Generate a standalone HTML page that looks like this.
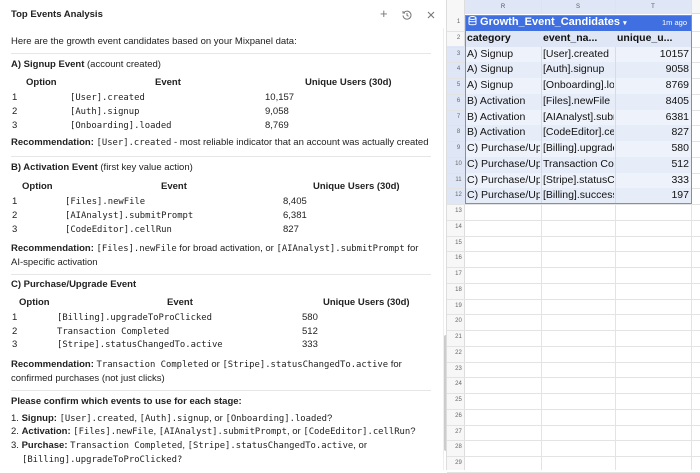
<!DOCTYPE html>
<html><head><style>
*{margin:0;padding:0;box-sizing:border-box}
body{width:700px;height:470px;overflow:hidden;background:#fff;font-family:"Liberation Sans",sans-serif;color:#222;position:relative;font-size:9.5px}
.a{position:absolute;white-space:nowrap;line-height:12px}
.m{font-family:"DejaVu Sans Mono","Liberation Mono",monospace;font-size:8.9px}
b{font-weight:bold}
.hr{position:absolute;left:11px;width:420px;height:1px;background:#e6e6e6}
.th{font-weight:bold}
#grid{position:absolute;left:446px;top:0;width:254px;height:470px;background:#fff;border-left:1px solid #ddd}
.gl{position:absolute;background:#e3e3e3}
.rn{position:absolute;left:5px;width:13px;text-align:center;font-size:6px;color:#666;line-height:15.75px}
.c{position:absolute;font-size:10.5px;line-height:15.75px;white-space:nowrap;overflow:hidden;color:#111}
</style></head><body>
<div class="a" style="left:11px;top:9px;font-weight:bold;font-size:9.5px">Top Events Analysis</div>
<div class="a" style="left:380px;top:8px;font-size:13px;color:#777">+</div>
<svg class="a" style="left:402px;top:10px" width="10" height="10" viewBox="0 0 10 10" fill="none" stroke="#777" stroke-width="1"><path d="M2 2.5A4 4 0 1 1 1 5.5"/><path d="M1 1v2h2"/><path d="M5 3v2.3l1.5 1"/></svg>
<svg class="a" style="left:427px;top:11px" width="8" height="8" viewBox="0 0 8 8" stroke="#777" stroke-width="1.1"><path d="M1 1l6 6M7 1l-6 6"/></svg>
<div style="position:absolute;left:443px;top:28px;width:1px;height:442px;background:#eee"></div>
<div style="position:absolute;left:444px;top:335px;width:4px;height:116px;background:#ccc;border-radius:2px"></div>

<div class="a" style="left:11px;top:36px">Here are the growth event candidates based on your Mixpanel data:</div>
<div class="hr" style="top:53px"></div>
<div class="a" style="left:11px;top:59px"><b>A) Signup Event</b> (account created)</div>
<div class="a th" style="left:26px;top:77px">Option</div>
<div class="a th" style="left:155px;top:77px">Event</div>
<div class="a th" style="left:305px;top:77px">Unique Users (30d)</div>
<div class="a" style="left:12px;top:92px">1</div><div class="a m" style="left:70px;top:92px">[User].created</div><div class="a" style="left:265px;top:92px">10,157</div>
<div class="a" style="left:12px;top:106px">2</div><div class="a m" style="left:70px;top:106px">[Auth].signup</div><div class="a" style="left:265px;top:106px">9,058</div>
<div class="a" style="left:12px;top:120px">3</div><div class="a m" style="left:70px;top:120px">[Onboarding].loaded</div><div class="a" style="left:265px;top:120px">8,769</div>
<div class="a" style="left:11px;top:137px"><b>Recommendation:</b> <span class="m">[User].created</span> - most reliable indicator that an account was actually created</div>
<div class="hr" style="top:156px"></div>
<div class="a" style="left:11px;top:162px"><b>B) Activation Event</b> (first key value action)</div>
<div class="a th" style="left:22px;top:181px">Option</div>
<div class="a th" style="left:161px;top:181px">Event</div>
<div class="a th" style="left:313px;top:181px">Unique Users (30d)</div>
<div class="a" style="left:12px;top:196px">1</div><div class="a m" style="left:65px;top:196px">[Files].newFile</div><div class="a" style="left:283px;top:196px">8,405</div>
<div class="a" style="left:12px;top:210px">2</div><div class="a m" style="left:65px;top:210px">[AIAnalyst].submitPrompt</div><div class="a" style="left:283px;top:210px">6,381</div>
<div class="a" style="left:12px;top:224px">3</div><div class="a m" style="left:65px;top:224px">[CodeEditor].cellRun</div><div class="a" style="left:283px;top:224px">827</div>
<div class="a" style="left:11px;top:243px"><b>Recommendation:</b> <span class="m">[Files].newFile</span> for broad activation, or <span class="m">[AIAnalyst].submitPrompt</span> for</div>
<div class="a" style="left:11px;top:257px">AI-specific activation</div>
<div class="hr" style="top:274px"></div>
<div class="a" style="left:11px;top:279px"><b>C) Purchase/Upgrade Event</b></div>
<div class="a th" style="left:19px;top:297px">Option</div>
<div class="a th" style="left:167px;top:297px">Event</div>
<div class="a th" style="left:323px;top:297px">Unique Users (30d)</div>
<div class="a" style="left:12px;top:312px">1</div><div class="a m" style="left:57px;top:312px">[Billing].upgradeToProClicked</div><div class="a" style="left:302px;top:312px">580</div>
<div class="a" style="left:12px;top:326px">2</div><div class="a m" style="left:57px;top:326px">Transaction Completed</div><div class="a" style="left:302px;top:326px">512</div>
<div class="a" style="left:12px;top:339px">3</div><div class="a m" style="left:57px;top:339px">[Stripe].statusChangedTo.active</div><div class="a" style="left:302px;top:339px">333</div>
<div class="a" style="left:11px;top:359px"><b>Recommendation:</b> <span class="m">Transaction Completed</span> or <span class="m">[Stripe].statusChangedTo.active</span> for</div>
<div class="a" style="left:11px;top:373px">confirmed purchases (not just clicks)</div>
<div class="hr" style="top:390px"></div>
<div class="a" style="left:11px;top:396px"><b>Please confirm which events to use for each stage:</b></div>
<div class="a" style="left:11px;top:413px">1. <b>Signup:</b> <span class="m">[User].created</span>, <span class="m">[Auth].signup</span>, or <span class="m">[Onboarding].loaded</span>?</div>
<div class="a" style="left:11px;top:426px">2. <b>Activation:</b> <span class="m">[Files].newFile</span>, <span class="m">[AIAnalyst].submitPrompt</span>, or <span class="m">[CodeEditor].cellRun</span>?</div>
<div class="a" style="left:11px;top:440px">3. <b>Purchase:</b> <span class="m">Transaction Completed</span>, <span class="m">[Stripe].statusChangedTo.active</span>, or</div>
<div class="a m" style="left:22px;top:454px">[Billing].upgradeToProClicked?</div>

<div id="grid">
<div style="position:absolute;left:0;top:0;width:254px;height:14px;background:#f7f7f7;border-bottom:1px solid #ddd"></div>
<div style="position:absolute;left:18px;top:0;width:226px;height:14px;background:#dfe7f7"></div>
<div style="position:absolute;left:0;top:0;width:18px;height:470px;background:#f7f7f7;border-right:1px solid #ddd"></div>
<div style="position:absolute;left:0;top:46px;width:18px;height:158px;background:#dfe7f7"></div>
<div class="a" style="left:18px;top:2px;width:76px;text-align:center;font-size:6px;color:#555;line-height:10px">R</div>
<div class="a" style="left:94px;top:2px;width:74px;text-align:center;font-size:6px;color:#555;line-height:10px">S</div>
<div class="a" style="left:168px;top:2px;width:76px;text-align:center;font-size:6px;color:#555;line-height:10px">T</div>
<div class="gl" style="left:94px;top:0;width:1px;height:14px"></div>
<div class="gl" style="left:168px;top:0;width:1px;height:14px"></div>
<div class="gl" style="left:244px;top:0;width:1px;height:470px"></div>
<div class="gl" style="left:94px;top:204px;width:1px;height:266px"></div>
<div class="gl" style="left:168px;top:204px;width:1px;height:266px"></div>
<div id="rows"></div>
<div style="position:absolute;left:18px;top:15px;width:226px;height:15.75px;background:#3f6fe0;color:#fff;font-weight:bold;font-size:11px;line-height:15.75px;padding-left:3px">
<svg width="9" height="10" viewBox="0 0 9 10" style="vertical-align:-1px" fill="none" stroke="#fff" stroke-width="1"><ellipse cx="4.5" cy="2" rx="3.5" ry="1.5"/><path d="M1 2v6c0 1 7 1 7 0V2M1 5c0 1 7 1 7 0"/></svg> Growth_Event_Candidates <span style="font-size:7px">▾</span><span style="position:absolute;right:4px;font-weight:normal;font-size:7.5px">1m ago</span></div>
<div style="position:absolute;left:18px;top:30.75px;width:226px;height:15.75px;background:#dfe7f7"></div>
<div class="c" style="left:20px;top:30.75px;font-weight:bold;width:72px">category</div>
<div class="c" style="left:96px;top:30.75px;font-weight:bold;width:72px">event_na...</div>
<div class="c" style="left:170px;top:30.75px;font-weight:bold;width:72px">unique_u...</div>
<div style="position:absolute;left:18px;top:15px;width:227px;height:189px;border:1px solid #6b8fe6"></div>
</div>
<script>
var g=document.getElementById('rows'),h='';
var d=[["A) Signup","[User].created","10157"],["A) Signup","[Auth].signup","9058"],["A) Signup","[Onboarding].loaded","8769"],["B) Activation","[Files].newFile","8405"],["B) Activation","[AIAnalyst].submitPrompt","6381"],["B) Activation","[CodeEditor].cellRun","827"],["C) Purchase/Upgrade","[Billing].upgradeToProClicked","580"],["C) Purchase/Upgrade","Transaction Completed","512"],["C) Purchase/Upgrade","[Stripe].statusChangedTo.active","333"],["C) Purchase/Upgrade","[Billing].successful","197"]];
for(var i=0;i<29;i++){var t=15+i*15.75;
h+='<div class="rn" style="top:'+t+'px">'+(i+1)+'</div>';
h+='<div class="gl" style="left:0;top:'+(t+15.75)+'px;width:254px;height:1px"></div>';
if(i>=2&&i<12){var r=d[i-2];
h+='<div style="position:absolute;left:18px;top:'+t+'px;width:226px;height:15.75px;background:'+(i%2?'#e6ecf8':'#eef2fb')+'"></div>';
h+='<div class="gl" style="left:94px;top:'+t+'px;width:1px;height:15.75px;background:#d5dbe8"></div><div class="gl" style="left:168px;top:'+t+'px;width:1px;height:15.75px;background:#d5dbe8"></div>';
h+='<div class="c" style="left:20px;top:'+t+'px;width:73px">'+r[0]+'</div><div class="c" style="left:96px;top:'+t+'px;width:71px">'+r[1]+'</div><div class="c" style="left:170px;top:'+t+'px;width:72px;text-align:right">'+r[2]+'</div>';}
}
g.innerHTML=h;
</script>
</body></html>
